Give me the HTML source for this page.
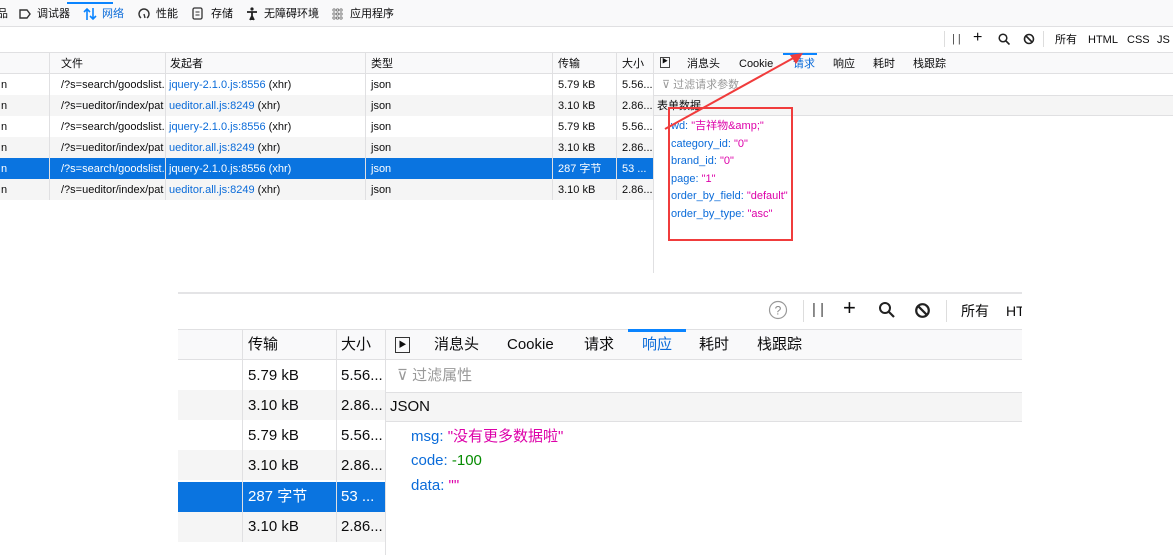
<!DOCTYPE html>
<html><head><meta charset="utf-8"><style>
*{margin:0;padding:0;box-sizing:border-box}
body{width:1173px;height:558px;background:#fff;position:relative;overflow:hidden;font-family:"Liberation Sans","Noto Sans CJK SC",sans-serif;font-size:11px;color:#0c0c0d;line-height:14px}
.a{position:absolute;white-space:nowrap;line-height:14px}
.big .a{line-height:18px}
.b{color:#0a6bd9}.p{color:#dd00a9}.g{color:#058b00}
.gray{color:#737373}
</style></head><body>
<!-- top toolbar -->
<div class="a" style="left:0;top:0;width:1173px;height:27px;background:#f9f9fa;border-bottom:1px solid #e0e0e2"></div>
<div class="a" style="left:67px;top:2px;width:46px;height:2px;background:#0a84ff"></div>
<div class="a" style="left:-3px;top:7px">品</div>
<svg class="a" style="left:19px;top:9px" width="12" height="10"><path d="M1 1h7l3 4-3 4H1z" fill="none" stroke="#333" stroke-width="1.4"/></svg>
<div class="a" style="left:37px;top:7px">调试器</div>
<svg class="a" style="left:83px;top:7px" width="14" height="14"><path d="M4 13V2M1 5l3-3 3 3M10 1v11M7 9l3 3 3-3" fill="none" stroke="#0a84ff" stroke-width="1.6"/></svg>
<div class="a b" style="left:102px;top:7px">网络</div>
<svg class="a" style="left:138px;top:8px" width="12" height="12"><path d="M3 10A5 5 0 1 1 9 10M6 6l1 4" fill="none" stroke="#333" stroke-width="1.4"/></svg>
<div class="a" style="left:156px;top:7px">性能</div>
<svg class="a" style="left:192px;top:7px" width="11" height="13"><rect x="1" y="1" width="9" height="11" rx="1.5" fill="none" stroke="#333" stroke-width="1.3"/><path d="M3.5 5h4M3.5 8h4" stroke="#333"/></svg>
<div class="a" style="left:211px;top:7px">存储</div>
<svg class="a" style="left:246px;top:7px" width="12" height="14"><circle cx="6" cy="2" r="1.6" fill="#222"/><path d="M1 5h10M6 5v8M4 13l2-4 2 4" fill="none" stroke="#222" stroke-width="1.8"/></svg>
<div class="a" style="left:264px;top:7px">无障碍环境</div>
<svg class="a" style="left:332px;top:8px" width="11" height="12"><g fill="none" stroke="#777" stroke-width=".9"><circle cx="2" cy="2" r="1.2"/><circle cx="5.5" cy="2" r="1.2"/><circle cx="9" cy="2" r="1.2"/><circle cx="2" cy="6" r="1.2"/><circle cx="5.5" cy="6" r="1.2"/><circle cx="9" cy="6" r="1.2"/><circle cx="2" cy="10" r="1.2"/><circle cx="5.5" cy="10" r="1.2"/><circle cx="9" cy="10" r="1.2"/></g></svg>
<div class="a" style="left:350px;top:7px">应用程序</div>
<!-- second toolbar -->
<div class="a" style="left:0;top:52px;width:1173px;height:1px;background:#e0e0e2"></div>
<div class="a" style="left:944px;top:31px;width:1px;height:16px;background:#ddd"></div>
<div class="a" style="left:952px;top:32px;color:#444">| |</div>
<div class="a" style="left:973px;top:31px;font-size:16px">+</div>
<svg class="a" style="left:998px;top:33px" width="12" height="12"><circle cx="5" cy="5" r="3.8" fill="none" stroke="#222" stroke-width="1.5"/><path d="M8 8l3.5 3.5" stroke="#222" stroke-width="1.6"/></svg>
<svg class="a" style="left:1023px;top:33px" width="12" height="12"><circle cx="6" cy="6" r="4.5" fill="none" stroke="#222" stroke-width="1.6"/><path d="M3 3l6 6" stroke="#222" stroke-width="1.6"/></svg>
<div class="a" style="left:1043px;top:31px;width:1px;height:16px;background:#ddd"></div>
<div class="a" style="left:1055px;top:33px">所有</div>
<div class="a" style="left:1088px;top:33px">HTML</div>
<div class="a" style="left:1127px;top:33px">CSS</div>
<div class="a" style="left:1157px;top:33px">JS</div>
<!-- table -->
<div class="a" style="left:0;top:53px;width:654px;height:21px;background:#f9f9fa;border-bottom:1px solid #e0e0e2"></div>
<div class="a" style="left:0;top:95px;width:654px;height:21px;background:#f5f5f5"></div>
<div class="a" style="left:0;top:137px;width:654px;height:21px;background:#f5f5f5"></div>
<div class="a" style="left:0;top:158px;width:654px;height:21px;background:#0a74e0"></div>
<div class="a" style="left:0;top:179px;width:654px;height:21px;background:#f5f5f5"></div>
<div class="a" style="left:49px;top:53px;width:1px;height:147px;background:#e0e0e2"></div>
<div class="a" style="left:165px;top:53px;width:1px;height:147px;background:#e0e0e2"></div>
<div class="a" style="left:365px;top:53px;width:1px;height:147px;background:#e0e0e2"></div>
<div class="a" style="left:552px;top:53px;width:1px;height:147px;background:#e0e0e2"></div>
<div class="a" style="left:616px;top:53px;width:1px;height:147px;background:#e0e0e2"></div>
<div class="a" style="left:653px;top:53px;width:1px;height:220px;background:#e0e0e2"></div>
<div class="a" style="left:61px;top:57px">文件</div>
<div class="a" style="left:170px;top:57px">发起者</div>
<div class="a" style="left:371px;top:57px">类型</div>
<div class="a" style="left:558px;top:57px">传输</div>
<div class="a" style="left:622px;top:57px">大小</div>
<div style="position:absolute;left:0;top:74px;width:654px">
<div style="position:relative;height:21px"><span class="a" style="left:1px;top:4px">n</span><span class="a" style="left:61px;top:4px;width:103px;overflow:hidden">/?s=search/goodslist.html</span><span class="a" style="left:169px;top:4px"><span class="b">jquery-2.1.0.js:8556</span> (xhr)</span><span class="a" style="left:371px;top:4px">json</span><span class="a" style="left:558px;top:4px">5.79 kB</span><span class="a" style="left:622px;top:4px">5.56...</span></div>
<div style="position:relative;height:21px"><span class="a" style="left:1px;top:4px">n</span><span class="a" style="left:61px;top:4px;width:103px;overflow:hidden">/?s=ueditor/index/path</span><span class="a" style="left:169px;top:4px"><span class="b">ueditor.all.js:8249</span> (xhr)</span><span class="a" style="left:371px;top:4px">json</span><span class="a" style="left:558px;top:4px">3.10 kB</span><span class="a" style="left:622px;top:4px">2.86...</span></div>
<div style="position:relative;height:21px"><span class="a" style="left:1px;top:4px">n</span><span class="a" style="left:61px;top:4px;width:103px;overflow:hidden">/?s=search/goodslist.html</span><span class="a" style="left:169px;top:4px"><span class="b">jquery-2.1.0.js:8556</span> (xhr)</span><span class="a" style="left:371px;top:4px">json</span><span class="a" style="left:558px;top:4px">5.79 kB</span><span class="a" style="left:622px;top:4px">5.56...</span></div>
<div style="position:relative;height:21px"><span class="a" style="left:1px;top:4px">n</span><span class="a" style="left:61px;top:4px;width:103px;overflow:hidden">/?s=ueditor/index/path</span><span class="a" style="left:169px;top:4px"><span class="b">ueditor.all.js:8249</span> (xhr)</span><span class="a" style="left:371px;top:4px">json</span><span class="a" style="left:558px;top:4px">3.10 kB</span><span class="a" style="left:622px;top:4px">2.86...</span></div>
<div style="position:relative;height:21px;color:#fff"><span class="a" style="left:1px;top:4px">n</span><span class="a" style="left:61px;top:4px;width:103px;overflow:hidden">/?s=search/goodslist.html</span><span class="a" style="left:169px;top:4px">jquery-2.1.0.js:8556 (xhr)</span><span class="a" style="left:371px;top:4px">json</span><span class="a" style="left:558px;top:4px">287 字节</span><span class="a" style="left:622px;top:4px">53 ...</span></div>
<div style="position:relative;height:21px"><span class="a" style="left:1px;top:4px">n</span><span class="a" style="left:61px;top:4px;width:103px;overflow:hidden">/?s=ueditor/index/path</span><span class="a" style="left:169px;top:4px"><span class="b">ueditor.all.js:8249</span> (xhr)</span><span class="a" style="left:371px;top:4px">json</span><span class="a" style="left:558px;top:4px">3.10 kB</span><span class="a" style="left:622px;top:4px">2.86...</span></div>
</div>
<!-- right panel -->
<div class="a" style="left:654px;top:53px;width:519px;height:21px;background:#f9f9fa;border-bottom:1px solid #e0e0e2"></div>
<div class="a" style="left:783px;top:53px;width:34px;height:2px;background:#0a84ff"></div>
<div class="a" style="left:660px;top:57px;width:10px;height:11px;border:1px solid #444;font-size:6px;line-height:9px;text-align:center">▶</div>
<div class="a" style="left:687px;top:57px">消息头</div>
<div class="a" style="left:739px;top:57px">Cookie</div>
<div class="a b" style="left:793px;top:57px">请求</div>
<div class="a" style="left:833px;top:57px">响应</div>
<div class="a" style="left:873px;top:57px">耗时</div>
<div class="a" style="left:913px;top:57px">栈跟踪</div>
<div class="a" style="left:654px;top:95px;width:519px;height:1px;background:#e0e0e2"></div>
<div class="a" style="left:662px;top:78px;color:#999">⊽ 过滤请求参数</div>
<div class="a" style="left:654px;top:96px;width:519px;height:20px;background:#f5f5f5;border-bottom:1px solid #e0e0e2"></div>
<div class="a" style="left:657px;top:99px">表单数据</div>
<div class="a" style="left:671px;top:119px">
<div style="height:17.6px"><span class="b">wd:</span> <span class="p">"吉祥物&amp;amp;"</span></div>
<div style="height:17.6px"><span class="b">category_id:</span> <span class="p">"0"</span></div>
<div style="height:17.6px"><span class="b">brand_id:</span> <span class="p">"0"</span></div>
<div style="height:17.6px"><span class="b">page:</span> <span class="p">"1"</span></div>
<div style="height:17.6px"><span class="b">order_by_field:</span> <span class="p">"default"</span></div>
<div style="height:17.6px"><span class="b">order_by_type:</span> <span class="p">"asc"</span></div>
</div>
<div class="a" style="left:668px;top:107px;width:125px;height:134px;border:2px solid #f03c3c"></div>
<svg class="a" style="left:0;top:0" width="1173" height="558"><path d="M665 129L797 56" stroke="#f03c3c" stroke-width="2"/><path d="M803 53L790 55L796 64z" fill="#f03c3c"/></svg>
<!-- bottom zoom image -->
<div class="big">
<div class="a" style="left:178px;top:292px;width:844px;height:2px;background:#e4e4e6"></div>
<svg class="a" style="left:768px;top:300px" width="20" height="20"><circle cx="10" cy="10" r="8.5" fill="none" stroke="#999" stroke-width="1.2"/><text x="10" y="14.5" font-size="12" text-anchor="middle" fill="#888" font-family="Liberation Sans">?</text></svg>
<div class="a" style="left:803px;top:300px;width:1px;height:22px;background:#ddd"></div>
<div class="a" style="left:812px;top:301px;font-size:15px;color:#444">| |</div>
<div class="a" style="left:843px;top:299px;font-size:22px;font-weight:300">+</div>
<svg class="a" style="left:878px;top:301px" width="18" height="18"><circle cx="7" cy="7" r="5" fill="none" stroke="#222" stroke-width="2"/><path d="M11 11l5 5" stroke="#222" stroke-width="2.2"/></svg>
<svg class="a" style="left:914px;top:302px" width="17" height="17"><circle cx="8.5" cy="8.5" r="6.3" fill="none" stroke="#222" stroke-width="2.2"/><path d="M4.2 4.2l8.6 8.6" stroke="#222" stroke-width="2.2"/></svg>
<div class="a" style="left:946px;top:300px;width:1px;height:22px;background:#ddd"></div>
<div class="a" style="left:961px;top:302px;font-size:14px">所有</div>
<div class="a" style="left:1006px;top:302px;font-size:14px;width:16px;overflow:hidden">HTML</div>
<div class="a" style="left:178px;top:329px;width:844px;height:1px;background:#e0e0e2"></div>
<div class="a" style="left:178px;top:330px;width:844px;height:30px;background:#f9f9fa;border-bottom:1px solid #e0e0e2"></div>
<div class="a" style="left:628px;top:329px;width:58px;height:3px;background:#0a84ff"></div>
<div class="a" style="left:178px;top:390px;width:207px;height:30px;background:#f5f5f5"></div>
<div class="a" style="left:178px;top:450px;width:207px;height:30px;background:#f5f5f5"></div>
<div class="a" style="left:178px;top:482px;width:207px;height:30px;background:#0a74e0"></div>
<div class="a" style="left:178px;top:512px;width:207px;height:30px;background:#f5f5f5"></div>
<div class="a" style="left:242px;top:330px;width:1px;height:212px;background:#e0e0e2"></div>
<div class="a" style="left:336px;top:330px;width:1px;height:212px;background:#e0e0e2"></div>
<div class="a" style="left:385px;top:330px;width:1px;height:225px;background:#e0e0e2"></div>
<div style="font-size:15px">
<div class="a" style="left:248px;top:336px">传输</div>
<div class="a" style="left:341px;top:336px">大小</div>
<div class="a" style="left:395px;top:337px;width:15px;height:16px;border:1.5px solid #333;font-size:8px;line-height:13px;text-align:center">▶</div>
<div class="a" style="left:434px;top:336px">消息头</div>
<div class="a" style="left:507px;top:336px">Cookie</div>
<div class="a" style="left:584px;top:336px">请求</div>
<div class="a b" style="left:642px;top:336px">响应</div>
<div class="a" style="left:699px;top:336px">耗时</div>
<div class="a" style="left:757px;top:336px">栈跟踪</div>
<div class="a" style="left:248px;top:367px">5.79 kB</div><div class="a" style="left:341px;top:367px">5.56...</div>
<div class="a" style="left:248px;top:397px">3.10 kB</div><div class="a" style="left:341px;top:397px">2.86...</div>
<div class="a" style="left:248px;top:427px">5.79 kB</div><div class="a" style="left:341px;top:427px">5.56...</div>
<div class="a" style="left:248px;top:457px">3.10 kB</div><div class="a" style="left:341px;top:457px">2.86...</div>
<div class="a" style="left:248px;top:488px;color:#fff">287 字节</div><div class="a" style="left:341px;top:488px;color:#fff">53 ...</div>
<div class="a" style="left:248px;top:518px">3.10 kB</div><div class="a" style="left:341px;top:518px">2.86...</div>
<div class="a" style="left:397px;top:367px;color:#999">⊽ 过滤属性</div>
<div class="a" style="left:386px;top:392px;width:636px;height:30px;background:#f5f5f5;border-top:1px solid #e0e0e2;border-bottom:1px solid #e0e0e2"></div>
<div class="a" style="left:390px;top:398px">JSON</div>
<div class="a" style="left:411px;top:428px"><span class="b">msg:</span> <span class="p">"没有更多数据啦"</span></div>
<div class="a" style="left:411px;top:452px"><span class="b">code:</span> <span class="g">-100</span></div>
<div class="a" style="left:411px;top:477px"><span class="b">data:</span> <span class="p">""</span></div>
</div>
</div>
</body></html>
